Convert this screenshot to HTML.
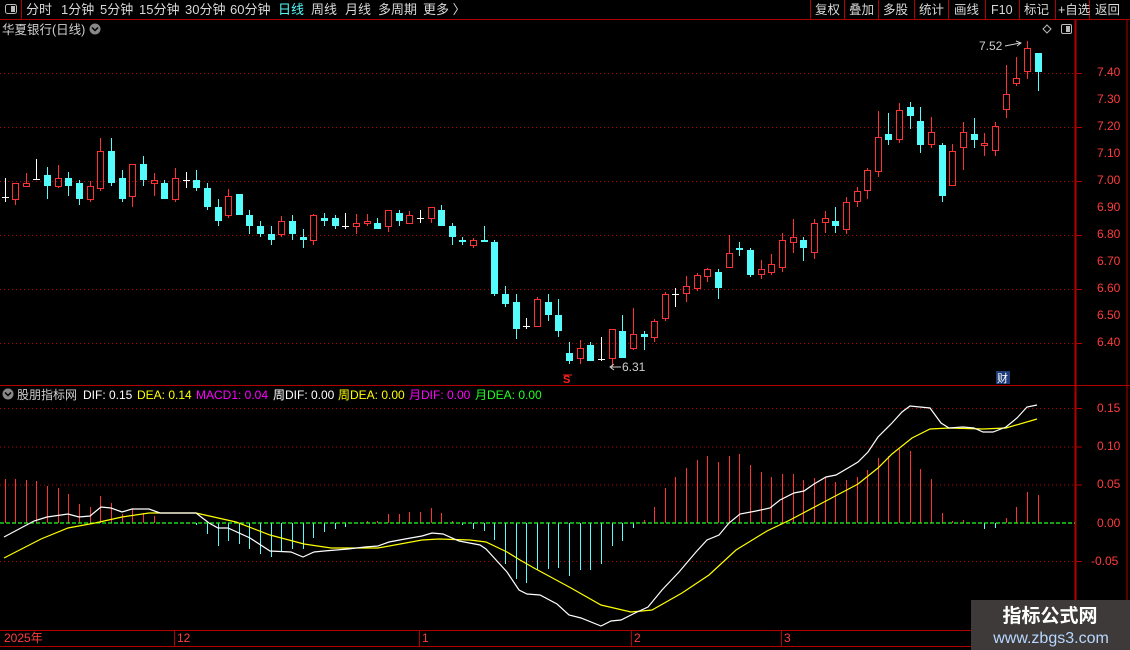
<!DOCTYPE html>
<html><head><meta charset="utf-8"><style>
html,body{margin:0;padding:0;background:#000;width:1130px;height:650px;overflow:hidden;font-family:"Liberation Sans","Noto Sans CJK SC",sans-serif;}
svg{position:absolute;left:0;top:0}
.t{font-family:"Liberation Sans","Noto Sans CJK SC",sans-serif;}
</style></head><body>
<svg id="s" width="1130" height="650" viewBox="0 0 1130 650" xmlns="http://www.w3.org/2000/svg">
<rect width="1130" height="650" fill="#000"/>
<line x1="0" y1="19.5" x2="1130" y2="19.5" stroke="#b00000"/>
<line x1="21.5" y1="0" x2="21.5" y2="19" stroke="#b00000"/>
<rect x="5.5" y="4.5" width="11" height="9" rx="2" fill="none" stroke="#bbb"/>
<rect x="11" y="6" width="4" height="6" fill="#bbb"/>
<g class="t" font-size="13" fill="#d8d8d8">
<text x="26" y="14">分时</text><text x="61" y="14">1分钟</text><text x="100" y="14">5分钟</text><text x="139" y="14">15分钟</text><text x="185" y="14">30分钟</text><text x="230" y="14">60分钟</text>
<text x="278" y="14" fill="#54fcfc">日线</text><text x="311" y="14">周线</text><text x="345" y="14">月线</text><text x="378" y="14">多周期</text><text x="423" y="14">更多 〉</text>
</g>
<g stroke="#b00000"><line x1="810.5" y1="0" x2="810.5" y2="19"/><line x1="844.5" y1="0" x2="844.5" y2="19"/><line x1="878.5" y1="0" x2="878.5" y2="19"/><line x1="914.5" y1="0" x2="914.5" y2="19"/><line x1="948.5" y1="0" x2="948.5" y2="19"/><line x1="985.5" y1="0" x2="985.5" y2="19"/><line x1="1019.5" y1="0" x2="1019.5" y2="19"/><line x1="1055.5" y1="0" x2="1055.5" y2="19"/><line x1="1089.5" y1="0" x2="1089.5" y2="19"/></g>
<g class="t" font-size="12.5" fill="#d8d8d8">
<text x="815" y="14">复权</text><text x="849" y="14">叠加</text><text x="883" y="14">多股</text><text x="919" y="14">统计</text><text x="954" y="14">画线</text><text x="991" y="14">F10</text><text x="1024" y="14">标记</text><text x="1058" y="14">+自选</text><text x="1095" y="14">返回</text>
</g>
<text class="t" x="2" y="34" font-size="12.5" fill="#d0d0d0">华夏银行(日线)</text>
<circle cx="95" cy="29" r="5.5" fill="#888"/><path d="M92,27.5 L95,30.5 L98,27.5" stroke="#000" stroke-width="1.5" fill="none"/>
<path d="M1047,25 L1051,29 L1047,33 L1043,29 Z" fill="none" stroke="#bbb"/>
<rect x="1061.5" y="24.5" width="10" height="9" rx="1.5" fill="none" stroke="#bbb"/><rect x="1066" y="26" width="4" height="6" fill="#bbb"/>
<line x1="1075.5" y1="20" x2="1075.5" y2="646" stroke="#b00000" stroke-width="2"/>
<line x1="1127" y1="20" x2="1127" y2="646" stroke="#b00000"/>
<line x1="0" y1="385.5" x2="1130" y2="385.5" stroke="#b00000"/>
<line x1="0" y1="630.5" x2="1076" y2="630.5" stroke="#b00000"/>
<line x1="0" y1="646.5" x2="1076" y2="646.5" stroke="#b00000"/>
<g id="grid"></g>
<g class="t" font-size="12" fill="#ff3c3c">
<text x="1097" y="76">7.40</text><text x="1097" y="103">7.30</text><text x="1097" y="130">7.20</text><text x="1097" y="157">7.10</text><text x="1097" y="184">7.00</text><text x="1097" y="211">6.90</text><text x="1097" y="238">6.80</text><text x="1097" y="265">6.70</text><text x="1097" y="292">6.60</text><text x="1097" y="319">6.50</text><text x="1097" y="346">6.40</text>
<text x="1097" y="412">0.15</text><text x="1097" y="450">0.10</text><text x="1097" y="488">0.05</text><text x="1097" y="527">0.00</text><text x="1091" y="565">-0.05</text>
<text x="4" y="642">2025年</text><text x="177" y="642">12</text><text x="422" y="642">1</text><text x="634" y="642">2</text><text x="784" y="642">3</text>
</g>
<g stroke="#b00000"><line x1="174.5" y1="630" x2="174.5" y2="646"/><line x1="419.5" y1="630" x2="419.5" y2="646"/><line x1="631.5" y1="630" x2="631.5" y2="646"/><line x1="781.5" y1="630" x2="781.5" y2="646"/></g>
<g id="cand"></g>
<g id="hist"></g>
<line x1="0" y1="523" x2="1075" y2="523" stroke="#22ff22" stroke-width="1.3" stroke-dasharray="4,2"/>
<polyline fill="none" stroke="#ffff00" stroke-width="1.2" points="4,558 41,539 68,528 95,523 122,517 149,513 196,513 236,522 270,535 304,544 331,548 378,548 422,540 439,539 470,540 486,542 507,552 520,560 534,568 571,588 601,605 631,612 652,610 682,593 709,575 736,550 767,531 790,520 824,502 858,484 878,468 892,454 912,438 930,429 949,428 983,429 1006,428 1037,419"/>
<polyline fill="none" stroke="#ffffff" stroke-width="1.2" points="4,537 34,521 47,517 68,514 79,517 90,516 101,507 111,508 122,512 132,509 149,509 160,513 196,513 209,523 218,528 228,528 250,538 270,551 291,552 303,557 314,552 324,551 348,549 365,547 378,546 389,542 405,539 422,536 432,533 443,534 459,541 480,545 486,549 507,572 519,590 527,594 540,595 557,604 569,615 581,618 601,626 611,621 621,620 635,613 648,607 662,590 679,572 696,552 707,540 719,535 729,523 740,514 756,511 770,508 780,500 794,493 804,491 814,484 826,477 836,475 848,468 858,462 868,452 878,437 892,423 902,412 910,406 930,408 941,423 949,428 963,427 974,428 983,432 993,432 1006,427 1017,418 1027,407 1037,405"/>
<text class="t" x="979" y="50" font-size="12" fill="#cfcfcf">7.52</text>
<path d="M1005,46 L1020,43 M1016,41 L1021,43 L1017,46" stroke="#cfcfcf" fill="none"/>
<text class="t" x="622" y="371" font-size="12" fill="#cfcfcf">6.31</text>
<path d="M621,367 L611,367 M614,364 L610,367 L614,370" stroke="#cfcfcf" fill="none"/>
<text class="t" x="563" y="383" font-size="11" fill="#ff2020" font-weight="bold">S</text>
<line x1="563" y1="375" x2="572" y2="375" stroke="#ff2020"/>
<rect x="996" y="371" width="14" height="13" fill="#1e3c78"/>
<text class="t" x="997" y="382" font-size="11" fill="#fff">财</text>
<circle cx="8" cy="394" r="5.5" fill="#888"/><path d="M5,392.5 L8,395.5 L11,392.5" stroke="#000" stroke-width="1.5" fill="none"/>
<g class="t" font-size="12"><text x="17" y="399" fill="#cfcfcf">股朋指标网</text>
<text x="83" y="399" fill="#fff">DIF: 0.15</text><text x="137" y="399" fill="#ffff00">DEA: 0.14</text><text x="196" y="399" fill="#ff00ff">MACD1: 0.04</text><text x="273" y="399" fill="#fff">周DIF: 0.00</text><text x="338" y="399" fill="#ffff00">周DEA: 0.00</text><text x="409" y="399" fill="#ff00ff">月DIF: 0.00</text><text x="475" y="399" fill="#22ff22">月DEA: 0.00</text></g>
<rect x="971" y="600" width="159" height="50" fill="#3e3a3a"/>
<text class="t" x="1050" y="622" font-size="19" font-weight="bold" fill="#fff" text-anchor="middle">指标公式网</text>
<text class="t" x="1051" y="643" font-size="16" fill="#b8d8ff" text-anchor="middle">www.zbgs3.com</text>
</svg>
<script>
var NS="http://www.w3.org/2000/svg";
function el(p,n,a){var e=document.createElementNS(NS,n);for(var k in a)e.setAttribute(k,a[k]);document.getElementById(p).appendChild(e);}
[73,127,181,235,289,343,408,446.5,484.5,561].forEach(function(y){el("grid","line",{x1:0,y1:y+0.5,x2:1075,y2:y+0.5,stroke:"#b00000","stroke-dasharray":"1,3"});el("grid","line",{x1:1076,y1:y+0.5,x2:1082,y2:y+0.5,stroke:"#b00000"});});
var C=[[197,197,178,202,'w'],[183,200,183,205,'r'],[183,187,173,187,'r'],[179,179,159,180,'w'],[175,186,167,199,'c'],[178,187,165,188,'r'],[178,186,172,196,'c'],[183,199,180,205,'c'],[186,200,181,202,'r'],[151,189,138,191,'r'],[151,183,138,186,'c'],[178,199,170,202,'c'],[164,197,164,207,'r'],[164,180,156,186,'c'],[180,184,173,196,'r'],[183,199,180,199,'c'],[178,200,168,202,'r'],[180,180,172,188,'w'],[180,188,170,191,'c'],[188,207,183,210,'c'],[207,221,199,226,'c'],[196,216,189,218,'r'],[194,215,194,215,'c'],[215,226,210,234,'c'],[226,234,221,237,'c'],[234,240,226,245,'c'],[221,235,216,237,'r'],[221,234,215,240,'c'],[237,240,229,248,'c'],[215,241,214,245,'r'],[218,221,213,226,'c'],[218,226,215,229,'c'],[226,226,213,229,'w'],[223,227,214,234,'r'],[221,223,214,226,'r'],[223,229,218,229,'c'],[210,227,210,232,'r'],[213,221,210,226,'c'],[215,224,211,224,'r'],[218,218,210,223,'w'],[207,219,207,223,'r'],[210,226,205,226,'c'],[226,237,223,245,'c'],[240,242,237,245,'c'],[240,246,238,248,'r'],[240,242,226,242,'c'],[242,294,240,296,'c'],[294,304,286,307,'c'],[302,329,294,339,'c'],[326,326,318,329,'w'],[299,327,297,327,'r'],[302,315,294,321,'c'],[315,331,299,337,'c'],[353,361,342,364,'c'],[348,359,340,364,'r'],[345,361,342,361,'c'],[359,359,337,361,'w'],[329,359,329,367,'r'],[331,358,315,358,'c'],[334,349,308,350,'r'],[334,337,331,350,'c'],[321,338,319,342,'r'],[294,319,292,321,'r'],[294,294,288,307,'w'],[286,294,276,302,'r'],[275,289,273,291,'r'],[269,277,268,282,'r'],[272,288,269,299,'c'],[253,268,235,268,'r'],[248,250,242,256,'c'],[250,275,248,277,'c'],[269,275,260,279,'r'],[264,273,254,275,'r'],[240,268,233,272,'r'],[237,243,219,253,'r'],[240,248,237,261,'c'],[223,253,219,259,'r'],[218,223,211,233,'r'],[221,226,207,233,'c'],[202,230,197,234,'r'],[191,202,187,207,'r'],[170,191,168,199,'r'],[137,172,111,177,'r'],[134,140,113,145,'c'],[110,140,103,143,'r'],[107,116,102,129,'c'],[121,145,107,153,'c'],[132,145,117,148,'r'],[145,196,143,202,'c'],[151,186,144,186,'r'],[132,148,122,170,'r'],[134,140,118,148,'c'],[143,145,133,156,'r'],[126,151,122,156,'r'],[94,110,65,118,'r'],[78,84,57,86,'r'],[48,72,41,79,'r'],[53,72,53,91,'c']];
var H=[479,479,480,481,486,488,494,504,507,496,503,514,509,513,516,522,522,522,525,534,546,541,544,549,554,557,552,549,549,538,532,529,527,524,521,521,514,514,512,512,508,513,521,525,529,531,540,564,579,583,570,569,568,576,570,570,564,546,541,528,520,507,488,477,468,460,456,462,456,454,465,472,477,474,474,480,478,477,482,480,477,470,458,456,449,451,469,479,513,521,520,523,529,528,518,507,492,495];
C.forEach(function(c,i){var x=Math.round(4.5+i*10.65);
 var col=c[4]=='r'?'#ff3232':(c[4]=='c'?'#54fcfc':'#ffffff');
 if(c[4]=='c'){el("cand","line",{x1:x+0.5,y1:c[2],x2:x+0.5,y2:c[3],stroke:col});el("cand","rect",{x:x-3,y:c[0],width:7,height:Math.max(2,c[1]-c[0]),fill:col});}
 else if(c[4]=='w'){el("cand","line",{x1:x+0.5,y1:c[2],x2:x+0.5,y2:c[3],stroke:col});el("cand","line",{x1:x-3,y1:c[0]+0.5,x2:x+4,y2:c[0]+0.5,stroke:col});}
 else{ if(c[2]<c[0])el("cand","line",{x1:x+0.5,y1:c[2],x2:x+0.5,y2:c[0],stroke:col}); if(c[3]>c[1])el("cand","line",{x1:x+0.5,y1:c[1],x2:x+0.5,y2:c[3],stroke:col});
  el("cand","rect",{x:x-2.5,y:c[0]+0.5,width:6,height:Math.max(2,c[1]-c[0]-1),fill:"none",stroke:col});}
 var h=H[i]; if(h!==undefined && Math.abs(h-523)>1){var hc=h<523?'#ff3232':'#54fcfc';el("hist","line",{x1:x+0.5,y1:h,x2:x+0.5,y2:523,stroke:hc});}
});
</script>
</body></html>
